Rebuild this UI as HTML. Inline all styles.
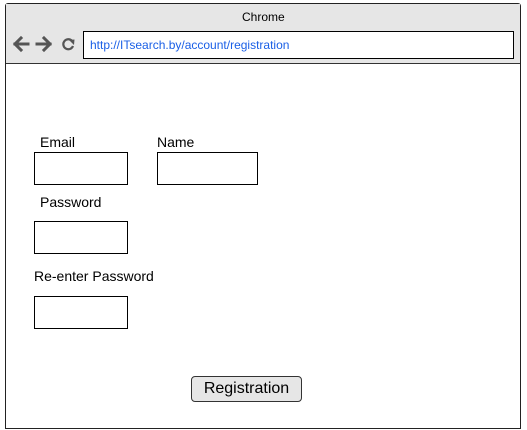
<!DOCTYPE html>
<html><head><style>
body{margin:0;width:527px;height:430px;background:#fff;position:relative;font-family:"Liberation Sans",Arial,sans-serif;overflow:hidden}
.abs{position:absolute}
.frame{left:5px;top:3px;width:514px;height:424px;border:1px solid #222;border-radius:3px 3px 0 0}
.hdr{left:6px;top:4px;width:514px;height:59px;background:#e6e6e6;border-bottom:1px solid #333}
.box{border:1px solid #000;background:#fff}
.lbl{font-size:14px;color:#000;line-height:16px}
</style></head><body>
<div class="abs frame"></div>
<div class="abs hdr"></div>
<div class="abs" style="left:242px;top:10px;font-size:12px">Chrome</div>
<svg class="abs" style="left:12px;top:35px" width="68" height="18" viewBox="0 0 68 18">
<g stroke="#555" stroke-width="3" fill="none" stroke-linecap="square">
<path d="M3 9H16M9 3L3 9L9 15"/>
<path d="M25 9H38M32 3L38 9L32 15"/>
</g>
<path d="M60.5 6.5A5 5 0 1 0 61 11" stroke="#555" stroke-width="2.2" fill="none"/>
<path d="M57 5L62.5 4.5L62 10Z" fill="#555"/>
</svg>
<div class="abs box" style="left:83px;top:31px;width:429px;height:26px"></div>
<div class="abs" style="left:90px;top:38px;font-size:12px;color:#1a5fe6">http://ITsearch.by/account/registration</div>
<div class="abs lbl" style="left:40px;top:134px">Email</div>
<div class="abs lbl" style="left:157px;top:134px">Name</div>
<div class="abs box" style="left:34px;top:152px;width:92px;height:31px"></div>
<div class="abs box" style="left:157px;top:152px;width:99px;height:31px"></div>
<div class="abs lbl" style="left:40px;top:194px">Password</div>
<div class="abs box" style="left:34px;top:221px;width:92px;height:31px"></div>
<div class="abs lbl" style="left:34px;top:268px">Re-enter Password</div>
<div class="abs box" style="left:34px;top:296px;width:92px;height:31px"></div>
<div class="abs" style="left:191px;top:376px;width:109px;height:24px;border:1px solid #333;border-radius:4px;background:#e6e6e6;font-size:16px;text-align:center;line-height:24px">Registration</div>
</body></html>
